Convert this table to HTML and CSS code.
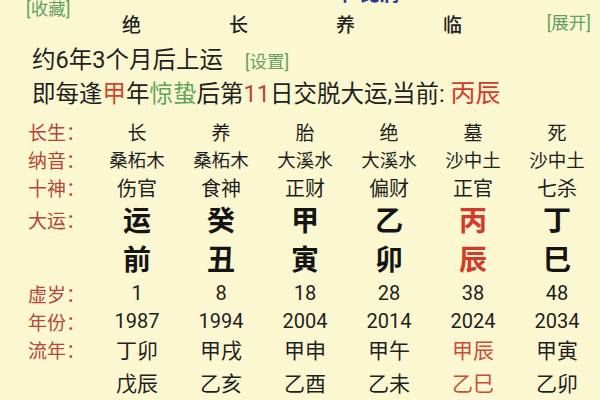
FILE: index.html
```html
<!DOCTYPE html>
<html lang="zh-CN">
<head>
<meta charset="utf-8">
<link rel="stylesheet" href="styles.css">
</head>
<body>
<div class="page">
  <div class="head">
    <div class="clipped"><span class="prev">辛 比肩</span></div>
    <div class="pillars">
      <span>绝</span><span>长</span><span>养</span><span>临</span>
      <span class="link expand">[展开]</span>
    </div>
    <span class="link fav">[收藏]</span>
  </div>
  <div class="info">
    <div class="line">约6年3个月后上运<span class="link set">[设置]</span></div>
    <div class="line">即每逢<span class="red">甲</span>年<span class="green">惊蛰</span>后第<span class="red2">11</span>日交脱大运,当前: <span class="cur">丙辰</span></div>
  </div>
  <div class="table">
    <div class="lab">长生：</div>
    <div class="r1">长</div><div class="r1">养</div><div class="r1">胎</div><div class="r1">绝</div><div class="r1">墓</div><div class="r1">死</div>

    <div class="lab">纳音：</div>
    <div>桑柘木</div><div>桑柘木</div><div>大溪水</div><div>大溪水</div><div>沙中土</div><div>沙中土</div>

    <div class="lab">十神：</div>
    <div class="r3">伤官</div><div class="r3">食神</div><div class="r3">正财</div><div class="r3">偏财</div><div class="r3">正官</div><div class="r3">七杀</div>

    <div class="lab">大运：</div>
    <div class="big">运</div><div class="big">癸</div><div class="big">甲</div><div class="big">乙</div><div class="big hot">丙</div><div class="big">丁</div>

    <div class="lab"></div>
    <div class="big">前</div><div class="big">丑</div><div class="big">寅</div><div class="big">卯</div><div class="big hot">辰</div><div class="big">巳</div>

    <div class="lab">虚岁：</div>
    <div class="num">1</div><div class="num">8</div><div class="num">18</div><div class="num">28</div><div class="num">38</div><div class="num">48</div>

    <div class="lab">年份：</div>
    <div class="num">1987</div><div class="num">1994</div><div class="num">2004</div><div class="num">2014</div><div class="num">2024</div><div class="num">2034</div>

    <div class="lab">流年：</div>
    <div class="ln">丁卯</div><div class="ln">甲戌</div><div class="ln">甲申</div><div class="ln">甲午</div><div class="ln warm">甲辰</div><div class="ln">甲寅</div>

    <div class="lab"></div>
    <div class="ln">戊辰</div><div class="ln">乙亥</div><div class="ln">乙酉</div><div class="ln">乙未</div><div class="ln warm">乙巳</div><div class="ln">乙卯</div>
  </div>
</div>
</body>
</html>
```
FILE: styles.css
```css
html, body {
  margin: 0;
  padding: 0;
}
body {
  background: #fbf7d0;
  font-family: Roboto, "Noto Sans CJK SC", sans-serif;
  color: #1f1f1f;
  width: 600px;
  height: 400px;
  overflow: hidden;
}
.page {
  width: 600px;
}
.head {
  position: relative;
  height: 44px;
}
.clipped {
  height: 5px;
  overflow: hidden;
  padding-left: 335px;
}
.prev {
  display: block;
  margin-top: -17px;
  font-size: 20px;
  line-height: 22px;
  font-weight: 700;
  color: #27389a;
}
.pillars {
  display: grid;
  grid-template-columns: repeat(4, 107px) 1fr;
  padding-left: 78px;
  padding-right: 9px;
  height: 36px;
  align-items: center;
  font-size: 19px;
  font-weight: 500;
}
.pillars span {
  text-align: center;
}
.link {
  color: #63a065;
  font-size: 17.5px;
  font-weight: 400;
}
.pillars .expand {
  text-align: right;
  margin-top: -3px;
}
.fav {
  position: absolute;
  left: 26px;
  top: -1px;
  line-height: 20px;
}
.info {
  padding-left: 32px;
  font-size: 23.5px;
}
.line {
  height: 33px;
  line-height: 33px;
  white-space: nowrap;
}
.set {
  margin-left: 22px;
}
.red { color: #d8432b; }
.green { color: #5fa65d; }
.red2 { color: #c0432f; }
.cur {
  color: #d63a2b;
  font-size: 25px;
}
.table {
  margin-top: 7px;
  display: grid;
  grid-template-columns: 67px repeat(6, 84px);
  grid-template-rows: 28px 28px 28px 36px 42px 28px 28px 28px 38px;
  padding-left: 28px;
  font-size: 18.5px;
  align-items: center;
  text-align: center;
}
.table .lab {
  text-align: left;
  color: #b4473a;
  font-size: 19px;
  white-space: nowrap;
}
.r1 { font-size: 19px; }
.r3 { font-size: 20px; }
.ln { font-size: 21px; }
.big {
  font-size: 28px;
  font-weight: 700;
  color: #141414;
}
.hot { color: #d43a2c; }
.num { font-size: 20px; }
.warm { color: #c84d37; }
```
